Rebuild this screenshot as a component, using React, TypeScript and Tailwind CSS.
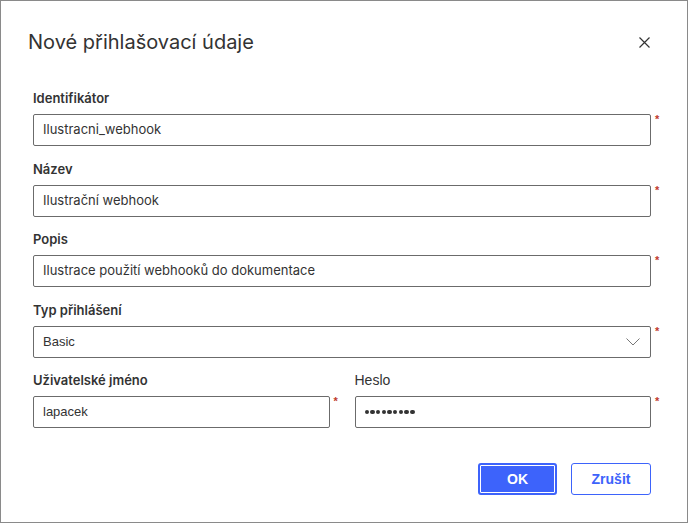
import React from "react";

const inter = "font-['Inter',sans-serif]";
const arial = "font-['Liberation_Sans',Arial,sans-serif]";

function Req() {
  return (
    <span className="w-[20px] shrink-0 pl-[4px] text-[11px] leading-[11px] text-[#c0392b] font-['Liberation_Sans',sans-serif] font-bold">
      *
    </span>
  );
}

function Field({
  label,
  value,
  labelClass = inter + " font-semibold text-[13px]",
  valueClass = inter,
  children,
}: {
  label: string;
  value?: string;
  labelClass?: string;
  valueClass?: string;
  children?: React.ReactNode;
}) {
  return (
    <div className="flex flex-col">
      <div className={"h-[16px] leading-[16px] mb-[8px] text-[#333] " + labelClass}>{label}</div>
      <div className="flex items-start">
        <div className="flex-1 h-[32px] border border-[#6b6b6b] rounded-[2px] flex items-center px-[9px] text-[13px] text-[#333]">
          {children ?? <span className={valueClass}>{value}</span>}
        </div>
        <Req />
      </div>
    </div>
  );
}

export default function App() {
  return (
    <div className="w-[688px] h-[523px] bg-white border border-[#8a8a8a] flex flex-col">
      {/* Header */}
      <div className="flex items-center justify-between pt-[29px] pl-[27px] pr-[37px]">
        <h1 className={inter + " text-[20px] leading-[24px] text-[#333] font-normal"}>
          Nové přihlašovací údaje
        </h1>
        <svg width="11" height="11" viewBox="0 0 11 11" className="mt-[1px]">
          <path d="M0.5 0.5 L10.5 10.5 M10.5 0.5 L0.5 10.5" stroke="#333" strokeWidth="1.2" fill="none" />
        </svg>
      </div>

      {/* Form */}
      <div className="flex flex-col gap-[14.5px] pl-[32px] pr-[16px] mt-[36px]">
        <Field label="Identifikátor" value="Ilustracni_webhook" />
        <Field label="Název" value="Ilustrační webhook" />
        <Field label="Popis" value="Ilustrace použití webhooků do dokumentace" />
        <Field label="Typ přihlášení">
          <div className="flex-1 flex items-center justify-between">
            <span className={arial + " text-[13px]"}>Basic</span>
            <svg width="14" height="8" viewBox="0 0 14 8" className="mr-[1px]">
              <path d="M0.5 0.5 L7 7 L13.5 0.5" stroke="#777" strokeWidth="1" fill="none" />
            </svg>
          </div>
        </Field>
        <div className="grid grid-cols-2 gap-x-[5px]">
          <Field label="Uživatelské jméno" value="lapacek" valueClass={arial} />
          <Field label="Heslo" labelClass={arial + " text-[14px]"}>
            <div className="flex gap-[1.2px]">
              {Array.from({ length: 9 }).map((_, i) => (
                <span key={i} className="w-[4.5px] h-[4.5px] rounded-full bg-[#333]" />
              ))}
            </div>
          </Field>
        </div>
      </div>

      {/* Footer */}
      <div className="flex justify-end gap-[14px] pr-[36px] mt-[35px]">
        <button
          className={
            arial +
            " w-[79px] h-[32px] rounded-[3px] bg-[#3d63fb] border-2 border-[#3d63fb] shadow-[inset_0_0_0_1px_#ffffff] text-white text-[14px] font-bold"
          }
        >
          OK
        </button>
        <button
          className={
            arial +
            " w-[80px] h-[32px] rounded-[3px] bg-white border border-[#3d63fb] text-[#3d63fb] text-[14px] font-bold"
          }
        >
          Zrušit
        </button>
      </div>
    </div>
  );
}
